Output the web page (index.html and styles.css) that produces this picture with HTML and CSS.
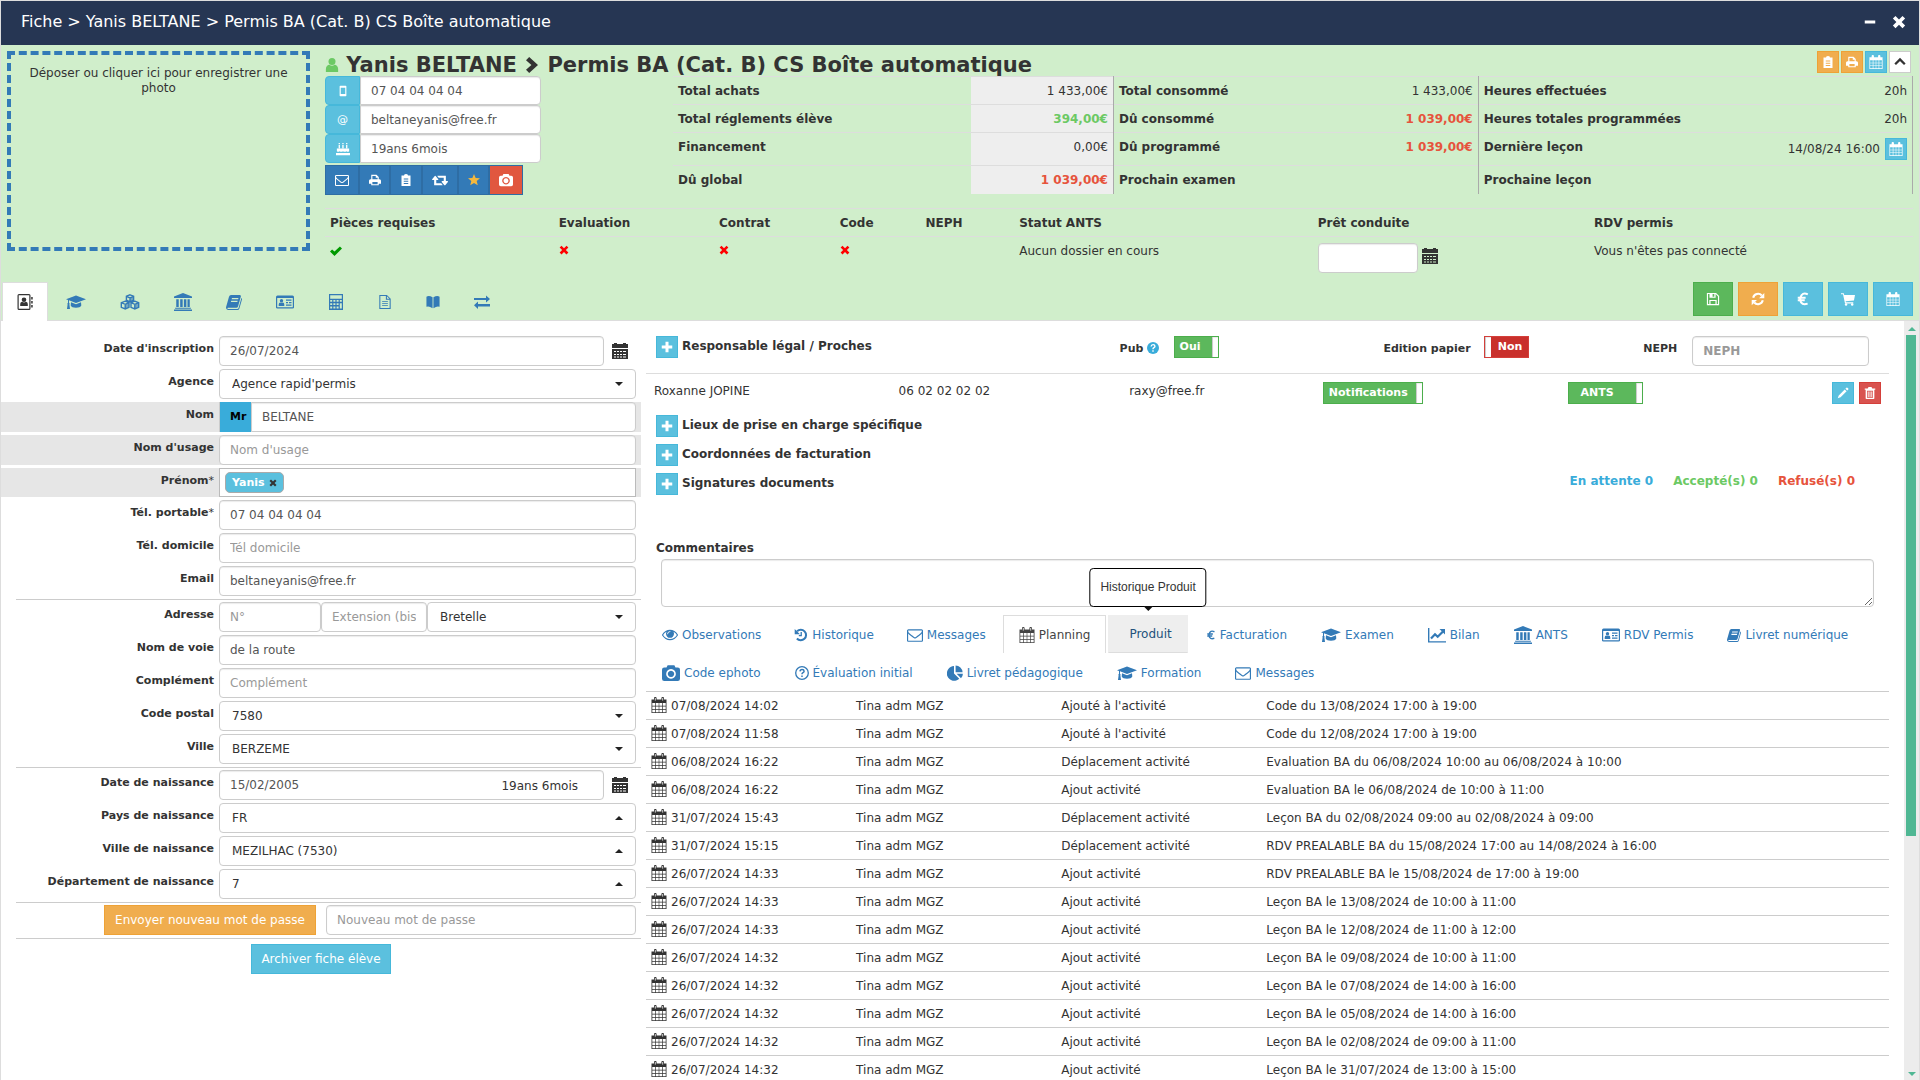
FILE: index.html
```html
<!DOCTYPE html>
<html lang="fr">
<head>
<meta charset="utf-8">
<title>Fiche élève</title>
<link rel="stylesheet" href="styles.css">
</head>
<body>
<svg class="sprite" aria-hidden="true">
  <symbol id="calendar" viewBox="0 0 16 16"><path fill-rule="evenodd" d="M.5 2.500h15V16H.5zM1.300 6v2.800h3V6zM5 6v2.800h2.700V6zM8.300 6v2.800H11V6zM11.700 6v2.800h3V6zM1.300 9.400v2.700h3V9.400zM5 9.400v2.700h2.700V9.400zM8.300 9.400v2.700H11V9.400zM11.700 9.400v2.700h3V9.400zM1.300 12.700v2.500h3v-2.500zM5 12.700v2.500h2.700v-2.500zM8.300 12.700v2.500H11v-2.500zM11.700 12.700v2.500h3v-2.500z"/><rect x="3" y="0" width="2.600" height="4.500" rx="1.100"/><rect x="10.400" y="0" width="2.600" height="4.500" rx="1.100"/><path d="M4.300 1v2.600M11.700 1v2.600" stroke="#fff" stroke-width=".8"/></symbol>
  <symbol id="picker" viewBox="0 0 16 16"><path fill-rule="evenodd" d="M0 1h2V0h3v1h6V0h3v1h2v4H0zM0 6h16v10H0zM2 8v1h2V8zM5 8v1h2V8zM8 8v1h2V8zM11 8v1h3V8zM2 11v1h2v-1zM5 11v1h2v-1zM8 11v1h2v-1zM11 11v1h3v-1zM2 13.500v1h2v-1zM5 13.500v1h2v-1zM8 13.500v1h2v-1zM11 13.500v1h3v-1z"/></symbol>
  <symbol id="envelope" viewBox="0 0 1792 1792"><path d="M1664 1504v-768q-32 36-69 66-268 206-426 338-51 43-83 67t-86.500 48.500-102.500 24.500h-2q-48 0-102.500-24.500t-86.500-48.500-83-67q-158-132-426-338-37-30-69-66v768q0 13 9.500 22.500t22.500 9.500h1472q13 0 22.500-9.500t9.500-22.500zm0-1051v-24.500l-.5-13-3-12.500-5.500-9-9-7.500-14-2.500h-1472q-13 0-22.500 9.500t-9.500 22.500q0 168 147 284 193 152 401 317 6 5 35 29.500t46 37.500 44.500 31.500 50.500 27.500 43 9h2q20 0 43-9t50.500-27.500 44.500-31.500 46-37.500 35-29.500q208-165 401-317 54-43 100.500-115.500t46.500-131.500zm128-37v1088q0 66-47 113t-113 47h-1472q-66 0-113-47t-47-113v-1088q0-66 47-113t113-47h1472q66 0 113 47t47 113z"/></symbol>
  <symbol id="eye" viewBox="0 64 1792 1792"><path d="M1664 960q-152-236-381-353 61 104 61 225 0 185-131.500 316.500t-316.500 131.500-316.500-131.500-131.500-316.500q0-121 61-225-229 117-381 353 133 205 333.500 326.500t434.500 121.500 434.500-121.500 333.500-326.500zm-720-384q0-20-14-34t-34-14q-125 0-214.500 89.500t-89.500 214.500q0 20 14 34t34 14 34-14 14-34q0-86 61-147t147-61q20 0 34-14t14-34zm848 384q0 34-20 69-140 230-376.500 368.500t-499.500 138.500-499.500-139-376.500-368q-20-35-20-69t20-69q140-229 376.500-368t499.500-139 499.500 139 376.500 368q20 35 20 69z"/></symbol>
  <symbol id="user" viewBox="0 0 16 16"><ellipse cx="8" cy="4" rx="4" ry="4"/><path d="M1 16v-3.500C1 9.500 3 8 5 7.800c2 1.300 4 1.300 6 0 2 .2 4 1.700 4 4.700V16z"/></symbol>
  <symbol id="chevron" viewBox="0 0 16 16"><path d="M2 3.200 5.200 0 14 8l-8.800 8L2 12.800 7.400 8z"/></symbol>
  <symbol id="up" viewBox="0 0 16 16"><path d="M2.500 10.500 8 5l5.500 5.500" fill="none" stroke="currentColor" stroke-width="2.600"/></symbol>
  <symbol id="phone" viewBox="0 0 16 16"><path fill-rule="evenodd" d="M4.500 1h7q1 0 1 1v12q0 1-1 1h-7q-1 0-1-1V2q0-1 1-1zM5 3.500v8.500h6V3.500z"/></symbol>
  <symbol id="cake" viewBox="0 0 16 16"><path d="M3 3.500h1.500V7H3zM7.200 3.500h1.500V7H7.200zM11.500 3.500H13V7h-1.500zM3 1h1.500v1.500H3zM7.200 1h1.500v1.500H7.200zM11.500 1H13v1.500h-1.500zM1 7.500h14v3q-1.500 1.500-3 0-2 1.500-4 0-2 1.500-4 0-1.500 1.500-3 0zM0 12.500h16V15H0z"/></symbol>
  <symbol id="print" viewBox="0 0 16 16"><path fill-rule="evenodd" d="M3 7V1h7l3 3v3h1q2 0 2 2v4h-3v2H3v-2H0V9q0-2 2-2zM4.500 7h7V5H9V2.500H4.500zM4.500 10.500v3h7v-3z"/></symbol>
  <symbol id="clip" viewBox="0 0 16 16"><path fill-rule="evenodd" d="M2 2h3.500V1q2.500-2 5 0v1H14v14H2zM5 6v1.200h6V6zM5 9v1.200h6V9zM5 12v1.200h6V12z"/></symbol>
  <symbol id="retweet" viewBox="0 0 1920 1792"><path d="M1280 1504q0 13-9.500 22.500t-22.500 9.500h-960q-8 0-13.500-2t-9-7-5.500-8-3-11.500-1-11.500v-600h-192q-26 0-45-19t-19-45q0-24 15-41l320-384q19-22 49-22t49 22l320 384q15 17 15 41 0 26-19 45t-45 19h-192v384h576q16 0 25 11l160 192q7 10 7 21zm640-416q0 24-15 41l-320 384q-20 23-49 23t-49-23l-320-384q-15-17-15-41 0-26 19-45t45-19h192v-384h-576q-16 0-25-12l-160-192q-7-9-7-20 0-13 9.500-22.500t22.500-9.500h960q8 0 13.500 2t9 7 5.500 8 3 11.500 1 11.500v600h192q26 0 45 19t19 45z"/></symbol>
  <symbol id="star" viewBox="0 0 16 16"><path d="m8 0 2.200 5.300 5.800.4-4.400 3.700 1.400 5.600L8 12l-5 3 1.400-5.600L0 5.700l5.800-.4z"/></symbol>
  <symbol id="camera" viewBox="0 0 16 16"><path fill-rule="evenodd" d="M5 1h6l1 2h2q2 0 2 2v8q0 2-2 2H2q-2 0-2-2V5q0-2 2-2h2zM8 4.500a4.300 4.300 0 1 0 .01 0zM8 6a2.800 2.800 0 1 1-.01 0z"/></symbol>
  <symbol id="check" viewBox="0 0 16 16"><path d="m0 8.500 2.800-2.600L6 8.800 13.200 2 16 4.700 6 14.500z"/></symbol>
  <symbol id="cross" viewBox="0 0 16 16"><path d="M1 4 4 1l4 4 4-4 3 3-4 4 4 4-3 3-4-4-4 4-3-3 4-4z"/></symbol>
  <symbol id="minus" viewBox="0 0 16 16"><path d="M1 6h14v4H1z"/></symbol>
  <symbol id="plus" viewBox="0 0 16 16"><path d="M6 1h4v5h5v4h-5v5H6v-5H1V6h5z"/></symbol>
  <symbol id="address" viewBox="0 0 16 16"><path fill-rule="evenodd" d="M2 0h10q1.500 0 1.500 1.500v13Q13.500 16 12 16H2Q.5 16 .5 14.500v-13Q.5 0 2 0zM1.700 1.200v13.600h10.600V1.200z"/><circle cx="7" cy="5.800" r="2.300"/><path d="M3.200 12V10q0-2 1.800-2.200 2 1.200 4 0 1.800.2 1.800 2.200v2zM14.200 3h1.500v2.500h-1.500zM14.200 7h1.500v2.500h-1.500zM14.200 11h1.500v2.500h-1.500z"/></symbol>
  <symbol id="cap" viewBox="0 0 20 16"><path d="m10 1.500 10 3.700-10 3.700L3 6.300v2.500q1 .6.400 1.600L4 15H1l.6-4.600q-.6-1 .4-1.600V6L0 5.200z"/><path d="m5 8.200 5 2 5-2 .3 3.300q-1 2.200-5.300 2.200t-5.300-2.200z"/></symbol>
  <symbol id="cubes" viewBox="0 0 20 16"><path d="M10 .8 13.600 2.200v4L10 7.800 6.400 6.200v-4zM6.400 2.400 10 4l3.600-1.600M10 4v3.800M5.200 7.200l3.800 1.500v4.600L5.200 15l-3.900-1.700V8.700zM1.300 8.700l3.900 1.600L9 8.700M5.200 10.300V15M14.800 7.200l3.900 1.500v4.600L14.800 15 11 13.300V8.700zM11 8.700l3.800 1.600 3.900-1.600M14.800 10.300V15" fill="none" stroke="currentColor" stroke-width="1.400"/><path d="m5.200 10.300 3.800-1.600v4.600L5.200 15zM14.800 10.300l3.900-1.600v4.600L14.800 15zM10 4l3.600-1.600v3.800L10 7.800z" opacity=".6"/></symbol>
  <symbol id="bank" viewBox="0 0 16 16"><path d="m8 0 8 3.200v1.300H0V3.200zM2 5.500h2.200v7H2zM5.500 5.500h2.200v7H5.500zM8.800 5.500H11v7H8.800zM12 5.500h2v7h-2zM1 13h14v1H1zM0 14.700h16V16H0z"/></symbol>
  <symbol id="book" viewBox="0 0 16 16"><path fill-rule="evenodd" d="M5 1h9q1.200.3.800 1.800L12 12.500q-.4 1.200-1.700 1.200H2q-.9.300-.3 1.200h9.500q1 0 1.400-1L15.400 4q1 .6.500 1.800l-2.600 9q-.5 1.200-1.700 1.200H2.300Q.6 16 .1 14.300q-.2-1 .2-2L3 2.800Q3.500 1 5 1zM6 4l-.4 1.200h6.500l.4-1.200zM5.200 6.700l-.3 1.200h6.400l.4-1.200z"/></symbol>
  <symbol id="card" viewBox="0 0 18 16"><path fill-rule="evenodd" d="M1.500 1.500h15Q18 1.500 18 3v10.500q0 1-1.500 1h-15Q0 14.500 0 13.500V3q0-1.500 1.500-1.500zM1.200 4v9.300h15.600V4zM10 5.500h5.500v1.200H10zM10 8h2v1.200h-2zM13 8h2.500v1.200H13zM10 10.500h5.500v1.200H10z"/><circle cx="5.500" cy="6.700" r="1.700"/><path d="M2.700 12v-1.500q0-2 1.600-2.100 1.200.8 2.400 0 1.600.1 1.600 2.100V12z"/></symbol>
  <symbol id="calc" viewBox="0 0 16 16"><path fill-rule="evenodd" d="M1 0h14v16H1zM2.200 1.200v3.600h11.600V1.200zM2.200 6v1.800h2V6zM5.400 6v1.800h2V6zM8.600 6v1.800h2V6zM11.800 6v1.800h2V6zM2.200 9.200V11h2V9.200zM5.400 9.200V11h2V9.200zM8.600 9.200V11h2V9.200zM2.200 12.500v2h2v-2zM5.400 12.500v2h2v-2zM8.600 12.500v2h2v-2zM11.800 9.200v5.300h2V9.200z"/></symbol>
  <symbol id="file" viewBox="0 0 14 16"><path fill-rule="evenodd" d="M.5 0h8.700L13.500 4.300V16H.5zM1.700 1.200v13.600h10.600V5.500H8V1.200zM9.200 1.500v2.800H12zM3.700 7h6.600v1H3.700zM3.700 9.300h6.600v1H3.700zM3.700 11.700h6.600v1H3.700z"/></symbol>
  <symbol id="openbook" viewBox="0 0 16 16"><path d="M.5 2Q3 0 7.500 2.500V15Q3 12 .5 13.500zM15.500 2Q13 0 8.500 2.500V15q4.500-3 7-1.500z"/></symbol>
  <symbol id="exchange" viewBox="0 0 16 16"><path d="M0 4h12V1.500L16 5l-4 3.500V6H0zM16 10H4V7.500L0 11.200 4 15v-2.500h12z"/></symbol>
  <symbol id="save" viewBox="0 0 16 16"><path fill-rule="evenodd" d="M1 1h10.500L15 4.500V15H1zM2.300 2.300v11.400h1.500V9h8.400v4.700h1.500V5L11 2.300V6.500H4V2.300zM5.200 10.200v3.500h5.600v-3.500zM7.500 2.300v3h2v-3z"/></symbol>
  <symbol id="refresh" viewBox="0 0 16 16"><path d="M2.500 6.500A5.700 5.700 0 0 1 12.300 4M13.500 9.500A5.700 5.700 0 0 1 3.700 12" fill="none" stroke="currentColor" stroke-width="2.400"/><path d="M15.200 1v6H9.200zM.8 15V9h6z"/></symbol>
  <symbol id="euro" viewBox="0 0 16 16"><path d="M13.500 2.800Q9 .5 6.400 3.500 4.500 6 4.800 9.500 6 15.500 13.300 13.300M2 6.500h9M2 9.500h8" fill="none" stroke="currentColor" stroke-width="2.300"/></symbol>
  <symbol id="cart" viewBox="0 0 16 16"><path d="M0 1.500h3.200L3.700 3.500H16l-1.200 6.200-9.500 1 .3 1.100H14V13H4.600L2.300 2.700H0z"/><circle cx="5.800" cy="14.300" r="1.400"/><circle cx="12.800" cy="14.300" r="1.400"/></symbol>
  <symbol id="question" viewBox="0 0 16 16"><circle cx="8" cy="8" r="8"/><path d="M5.500 6q.2-2.500 2.600-2.500T10.600 5.700Q10.600 7 8.800 7.900 8 8.400 8 9.500M8 11v2" fill="none" stroke="#fff" stroke-width="1.900"/></symbol>
  <symbol id="question-o" viewBox="0 0 16 16"><circle cx="8" cy="8" r="7.200" fill="none" stroke="currentColor" stroke-width="1.500"/><path d="M5.700 6.200q.2-2.200 2.400-2.200t2.300 2Q10.400 7 8.800 7.900 8 8.400 8 9.400M8 10.800v1.800" fill="none" stroke="currentColor" stroke-width="1.700"/></symbol>
  <symbol id="history" viewBox="0 0 16 16"><path d="M3.500 3.800A6 6 0 1 1 3.300 12" fill="none" stroke="currentColor" stroke-width="2.300"/><path d="M.8 1v6h6zM7.500 4.500h1.500V9.500H5.500V8h2z"/></symbol>
  <symbol id="chart" viewBox="0 0 18 16"><path d="M0 1h1.400v13.200H18V15.600H0z"/><path d="m3 11.500 4-4.300 2.700 2.600L15 4.500" fill="none" stroke="currentColor" stroke-width="2.200"/><path d="M11.500 2H17v5.500z"/></symbol>
  <symbol id="pie" viewBox="0 0 16 16"><path d="M7 1v7.500l5.300 5.300A7.400 7.400 0 1 1 7 1zM8.600.5a7.300 7.300 0 0 1 7 6.800h-7zM9.600 8.700h6.300q0 2.600-1.900 4.500z"/></symbol>
  <symbol id="pencil" viewBox="0 0 16 16"><path d="m10.300 3.200 2.500 2.500-8 8L1 15l1.300-3.800zM11.200 2.300 12.500 1q1-.6 1.800.2l.6.600q.7.900 0 1.700l-1.200 1.300z"/></symbol>
  <symbol id="trash" viewBox="0 0 16 16"><path fill-rule="evenodd" d="M6 0h4l1 2h4v1.600h-1.200V15q0 1-1 1H3.200q-1 0-1-1V3.600H1V2h4zM4 5v9.300h8V5zM5 6h1.200v7.200H5zM7.400 6h1.200v7.200H7.400zM9.800 6H11v7.200H9.800z"/></symbol>
</svg>

<div class="window">
  <header class="titlebar">
    <h1>Fiche &gt; Yanis BELTANE &gt; Permis BA (Cat. B) CS Boîte automatique</h1>
    <div class="window-actions">
      <button type="button" aria-label="Réduire"><svg class="i12"><use href="#minus"/></svg></button>
      <button type="button" aria-label="Fermer"><svg class="i14"><use href="#cross"/></svg></button>
    </div>
  </header>

  <section class="banner">
    <div class="identity">
      <button type="button" class="photo">Déposer ou cliquer ici pour enregistrer une photo</button>
      <div class="summary">
        <div class="summary-head">
          <h2><svg class="i14 user"><use href="#user"/></svg> Yanis BELTANE <svg class="i16"><use href="#chevron"/></svg> Permis BA (Cat. B) CS Boîte automatique</h2>
          <div class="quick">
            <button type="button" class="sq orange" aria-label="Dossier"><svg class="i12"><use href="#clip"/></svg></button>
            <button type="button" class="sq orange" aria-label="Imprimer"><svg class="i12"><use href="#print"/></svg></button>
            <button type="button" class="sq info" aria-label="Agenda"><svg class="i14"><use href="#calendar"/></svg></button>
            <button type="button" class="sq plain" aria-label="Replier"><svg class="i14"><use href="#up"/></svg></button>
          </div>
        </div>
        <div class="summary-body">
          <div class="contact">
            <div class="addon-row"><span class="addon"><svg class="i12"><use href="#phone"/></svg></span><input aria-label="Téléphone" value="07 04 04 04 04"></div>
            <div class="addon-row"><span class="addon">@</span><input aria-label="Email" value="beltaneyanis@free.fr"></div>
            <div class="addon-row"><span class="addon"><svg class="i14"><use href="#cake"/></svg></span><input aria-label="Âge" value="19ans 6mois"></div>
            <div class="toolbar">
              <button type="button" aria-label="Envoyer un message"><svg class="i14"><use href="#envelope"/></svg></button>
              <button type="button" aria-label="Imprimer"><svg class="i12"><use href="#print"/></svg></button>
              <button type="button" aria-label="Dossier"><svg class="i12"><use href="#clip"/></svg></button>
              <button type="button" aria-label="Transférer"><svg class="i16"><use href="#retweet"/></svg></button>
              <button type="button" class="gold" aria-label="Favori"><svg class="i12"><use href="#star"/></svg></button>
              <button type="button" class="danger" aria-label="Photo"><svg class="i14"><use href="#camera"/></svg></button>
            </div>
          </div>
          <table class="totals">
            <colgroup><col class="c1"><col class="c2"><col class="c3"><col class="c3"><col class="c4"><col class="c4"></colgroup>
            <tr><th scope="row">Total achats</th><td class="shade">1 433,00€</td><th scope="row">Total consommé</th><td>1 433,00€</td><th scope="row">Heures effectuées</th><td>20h</td></tr>
            <tr><th scope="row">Total réglements élève</th><td class="shade good">394,00€</td><th scope="row">Dû consommé</th><td class="bad">1 039,00€</td><th scope="row">Heures totales programmées</th><td>20h</td></tr>
            <tr class="tall"><th scope="row">Financement</th><td class="shade">0,00€</td><th scope="row">Dû programmé</th><td class="bad">1 039,00€</td><th scope="row">Dernière leçon</th><td><span class="lesson">14/08/24 16:00 <button type="button" class="sq info" aria-label="Agenda"><svg class="i14"><use href="#calendar"/></svg></button></span></td></tr>
            <tr><th scope="row">Dû global</th><td class="shade bad">1 039,00€</td><th scope="row">Prochain examen</th><td></td><th scope="row">Prochaine leçon</th><td></td></tr>
          </table>
        </div>
        <table class="status">
          <colgroup><col class="s1"><col class="s2"><col class="s3"><col class="s4"><col class="s5"><col class="s6"><col class="s7"><col></colgroup>
          <tr><th>Pièces requises</th><th>Evaluation</th><th>Contrat</th><th>Code</th><th>NEPH</th><th>Statut ANTS</th><th>Prêt conduite</th><th>RDV permis</th></tr>
          <tr>
            <td><svg class="i12 ok"><use href="#check"/></svg></td>
            <td><svg class="i10 ko"><use href="#cross"/></svg></td>
            <td><svg class="i10 ko"><use href="#cross"/></svg></td>
            <td><svg class="i10 ko"><use href="#cross"/></svg></td>
            <td></td><td>Aucun dossier en cours</td>
            <td><span class="date"><input aria-label="Prêt conduite"><svg class="i16"><use href="#picker"/></svg></span></td>
            <td>Vous n'êtes pas connecté</td>
          </tr>
        </table>
      </div>
    </div>
    <div class="tabbar">
      <nav class="main-tabs">
        <a href="#" class="active" aria-label="Fiche"><svg class="i16"><use href="#address"/></svg></a>
        <a href="#" aria-label="Formation"><svg class="i20"><use href="#cap"/></svg></a>
        <a href="#" aria-label="Produits"><svg class="i20"><use href="#cubes"/></svg></a>
        <a href="#" aria-label="ANTS"><svg class="i18"><use href="#bank"/></svg></a>
        <a href="#" aria-label="Livret"><svg class="i16"><use href="#book"/></svg></a>
        <a href="#" aria-label="Permis"><svg class="i18"><use href="#card"/></svg></a>
        <a href="#" aria-label="Comptes"><svg class="i16"><use href="#calc"/></svg></a>
        <a href="#" aria-label="Documents"><svg class="i14"><use href="#file"/></svg></a>
        <a href="#" aria-label="Code"><svg class="i14"><use href="#openbook"/></svg></a>
        <a href="#" aria-label="Échanges"><svg class="i16"><use href="#exchange"/></svg></a>
      </nav>
      <div class="actions">
        <button type="button" class="green" aria-label="Enregistrer"><svg class="i14"><use href="#save"/></svg></button>
        <button type="button" class="orange" aria-label="Actualiser"><svg class="i14"><use href="#refresh"/></svg></button>
        <button type="button" class="info" aria-label="Paiement"><svg class="i14"><use href="#euro"/></svg></button>
        <button type="button" class="info" aria-label="Panier"><svg class="i14"><use href="#cart"/></svg></button>
        <button type="button" class="info" aria-label="Agenda"><svg class="i14"><use href="#calendar"/></svg></button>
      </div>
    </div>
  </section>

  <main class="content">
    <form class="details">
      <div class="group">
        <div class="row"><label for="f1">Date d'inscription</label><div class="field date"><input id="f1" value="26/07/2024"><svg class="i16"><use href="#picker"/></svg></div></div>
        <div class="row"><label for="f2">Agence</label><div class="field select"><select id="f2"><option>Agence rapid'permis</option></select></div></div>
        <div class="row grey"><label for="f3">Nom</label><div class="field joined"><span class="civility">Mr</span><input id="f3" value="BELTANE"></div></div>
        <div class="row grey"><label for="f4">Nom d'usage</label><div class="field"><input id="f4" placeholder="Nom d'usage"></div></div>
        <div class="row grey"><label for="f5">Prénom<i>*</i></label><div class="field tags"><span class="tag">Yanis <button type="button" aria-label="Retirer"><svg class="i8"><use href="#cross"/></svg></button></span><input id="f5"></div></div>
        <div class="row"><label for="f6">Tél. portable<i>*</i></label><div class="field"><input id="f6" value="07 04 04 04 04"></div></div>
        <div class="row"><label for="f7">Tél. domicile</label><div class="field"><input id="f7" placeholder="Tél domicile"></div></div>
        <div class="row"><label for="f8">Email</label><div class="field"><input id="f8" value="beltaneyanis@free.fr"></div></div>
      </div>
      <div class="group ruled">
        <div class="row"><label for="f9">Adresse</label><div class="field address"><input id="f9" placeholder="N°"><input aria-label="Extension" placeholder="Extension (bis, ter)"><div class="select"><select aria-label="Type de voie"><option>Bretelle</option></select></div></div></div>
        <div class="row"><label for="f10">Nom de voie</label><div class="field"><input id="f10" value="de la route"></div></div>
        <div class="row"><label for="f11">Complément</label><div class="field"><input id="f11" placeholder="Complément"></div></div>
        <div class="row"><label for="f12">Code postal</label><div class="field select"><select id="f12"><option>7580</option></select></div></div>
        <div class="row"><label for="f13">Ville</label><div class="field select"><select id="f13"><option>BERZEME</option></select></div></div>
      </div>
      <div class="group ruled">
        <div class="row"><label for="f14">Date de naissance</label><div class="field date"><div class="birth"><input id="f14" value="15/02/2005"><span>19ans 6mois</span></div><svg class="i16"><use href="#picker"/></svg></div></div>
        <div class="row"><label for="f15">Pays de naissance</label><div class="field select up"><select id="f15"><option>FR</option></select></div></div>
        <div class="row"><label for="f16">Ville de naissance</label><div class="field select up"><select id="f16"><option>MEZILHAC (7530)</option></select></div></div>
        <div class="row"><label for="f17">Département de naissance</label><div class="field select up"><select id="f17"><option>7</option></select></div></div>
      </div>
      <div class="group ruled">
        <div class="password"><button type="button" class="orange">Envoyer nouveau mot de passe</button><input aria-label="Nouveau mot de passe" placeholder="Nouveau mot de passe"></div>
      </div>
      <div class="group ruled archive"><button type="button" class="info">Archiver fiche élève</button></div>
    </form>

    <div class="side">
      <div class="options">
        <div class="section-title"><button type="button" class="sq info" aria-label="Ajouter un proche"><svg class="i12"><use href="#plus"/></svg></button><h3>Responsable légal / Proches</h3></div>
        <span class="opt">Pub <svg class="i12 help"><use href="#question"/></svg></span>
        <label class="toggle">Oui<input type="checkbox" checked></label>
        <span class="opt">Edition papier</span>
        <label class="toggle off"><input type="checkbox">Non</label>
        <label class="opt" for="neph">NEPH</label>
        <input id="neph" class="neph" placeholder="NEPH">
      </div>
      <div class="relative">
        <span>Roxanne JOPINE</span><span>06 02 02 02 02</span><span>raxy@free.fr</span>
        <label class="toggle">Notifications<input type="checkbox" checked></label>
        <label class="toggle mid">ANTS<input type="checkbox" checked></label>
        <div class="row-actions"><button type="button" class="sq info" aria-label="Modifier"><svg class="i12"><use href="#pencil"/></svg></button><button type="button" class="sq red" aria-label="Supprimer"><svg class="i12"><use href="#trash"/></svg></button></div>
      </div>
      <div class="sections">
        <div class="section-title"><button type="button" class="sq info" aria-label="Ajouter un lieu"><svg class="i12"><use href="#plus"/></svg></button><h3>Lieux de prise en charge spécifique</h3></div>
        <div class="section-title"><button type="button" class="sq info" aria-label="Ajouter des coordonnées"><svg class="i12"><use href="#plus"/></svg></button><h3>Coordonnées de facturation</h3></div>
        <div class="section-title"><button type="button" class="sq info" aria-label="Ajouter une signature"><svg class="i12"><use href="#plus"/></svg></button><h3>Signatures documents</h3>
          <div class="counts"><span class="wait">En attente 0</span><span class="good">Accepté(s) 0</span><span class="bad">Refusé(s) 0</span></div></div>
      </div>
      <div class="comments"><label for="com">Commentaires</label><textarea id="com"></textarea></div>

      <nav class="tabs">
        <a href="#"><svg class="i16"><use href="#eye"/></svg>Observations</a>
        <a href="#"><svg class="i14"><use href="#history"/></svg>Historique</a>
        <a href="#"><svg class="i16"><use href="#envelope"/></svg>Messages</a>
        <a href="#" class="active"><svg class="i16"><use href="#calendar"/></svg>Planning</a>
        <a href="#" class="hover">Produit<span class="tip" role="tooltip">Historique Produit</span></a>
        <a href="#"><svg class="i10"><use href="#euro"/></svg>Facturation</a>
        <a href="#"><svg class="i20"><use href="#cap"/></svg>Examen</a>
        <a href="#"><svg class="i18"><use href="#chart"/></svg>Bilan</a>
        <a href="#"><svg class="i18"><use href="#bank"/></svg>ANTS</a>
        <a href="#"><svg class="i18"><use href="#card"/></svg>RDV Permis</a>
        <a href="#"><svg class="i14"><use href="#book"/></svg>Livret numérique</a>
        <a href="#"><svg class="i18"><use href="#camera"/></svg>Code ephoto</a>
        <a href="#"><svg class="i14"><use href="#question-o"/></svg>Évaluation initial</a>
        <a href="#"><svg class="i16"><use href="#pie"/></svg>Livret pédagogique</a>
        <a href="#"><svg class="i20"><use href="#cap"/></svg>Formation</a>
        <a href="#"><svg class="i16"><use href="#envelope"/></svg>Messages</a>
      </nav>

      <table class="log">
        <colgroup><col class="l"><col class="l"><col class="l"><col></colgroup>
        <tr><td><svg class="i16"><use href="#calendar"/></svg>07/08/2024 14:02</td><td>Tina adm MGZ</td><td>Ajouté à l'activité</td><td>Code du 13/08/2024 17:00 à 19:00</td></tr>
        <tr><td><svg class="i16"><use href="#calendar"/></svg>07/08/2024 11:58</td><td>Tina adm MGZ</td><td>Ajouté à l'activité</td><td>Code du 12/08/2024 17:00 à 19:00</td></tr>
        <tr><td><svg class="i16"><use href="#calendar"/></svg>06/08/2024 16:22</td><td>Tina adm MGZ</td><td>Déplacement activité</td><td>Evaluation BA du 06/08/2024 10:00 au 06/08/2024 à 10:00</td></tr>
        <tr><td><svg class="i16"><use href="#calendar"/></svg>06/08/2024 16:22</td><td>Tina adm MGZ</td><td>Ajout activité</td><td>Evaluation BA le 06/08/2024 de 10:00 à 11:00</td></tr>
        <tr><td><svg class="i16"><use href="#calendar"/></svg>31/07/2024 15:43</td><td>Tina adm MGZ</td><td>Déplacement activité</td><td>Leçon BA du 02/08/2024 09:00 au 02/08/2024 à 09:00</td></tr>
        <tr><td><svg class="i16"><use href="#calendar"/></svg>31/07/2024 15:15</td><td>Tina adm MGZ</td><td>Déplacement activité</td><td>RDV PREALABLE BA du 15/08/2024 17:00 au 14/08/2024 à 16:00</td></tr>
        <tr><td><svg class="i16"><use href="#calendar"/></svg>26/07/2024 14:33</td><td>Tina adm MGZ</td><td>Ajout activité</td><td>RDV PREALABLE BA le 15/08/2024 de 17:00 à 19:00</td></tr>
        <tr><td><svg class="i16"><use href="#calendar"/></svg>26/07/2024 14:33</td><td>Tina adm MGZ</td><td>Ajout activité</td><td>Leçon BA le 13/08/2024 de 10:00 à 11:00</td></tr>
        <tr><td><svg class="i16"><use href="#calendar"/></svg>26/07/2024 14:33</td><td>Tina adm MGZ</td><td>Ajout activité</td><td>Leçon BA le 12/08/2024 de 11:00 à 12:00</td></tr>
        <tr><td><svg class="i16"><use href="#calendar"/></svg>26/07/2024 14:32</td><td>Tina adm MGZ</td><td>Ajout activité</td><td>Leçon BA le 09/08/2024 de 10:00 à 11:00</td></tr>
        <tr><td><svg class="i16"><use href="#calendar"/></svg>26/07/2024 14:32</td><td>Tina adm MGZ</td><td>Ajout activité</td><td>Leçon BA le 07/08/2024 de 14:00 à 16:00</td></tr>
        <tr><td><svg class="i16"><use href="#calendar"/></svg>26/07/2024 14:32</td><td>Tina adm MGZ</td><td>Ajout activité</td><td>Leçon BA le 05/08/2024 de 14:00 à 16:00</td></tr>
        <tr><td><svg class="i16"><use href="#calendar"/></svg>26/07/2024 14:32</td><td>Tina adm MGZ</td><td>Ajout activité</td><td>Leçon BA le 02/08/2024 de 09:00 à 11:00</td></tr>
        <tr><td><svg class="i16"><use href="#calendar"/></svg>26/07/2024 14:32</td><td>Tina adm MGZ</td><td>Ajout activité</td><td>Leçon BA le 31/07/2024 de 13:00 à 15:00</td></tr>
      </table>
    </div>

    <div class="scrollbar" aria-hidden="true"><span class="arrow"></span><div class="track"><div class="thumb"></div></div><span class="arrow down"></span></div>
  </main>
</div>
</body>
</html>
```
FILE: styles.css
```css
* { box-sizing: border-box; }
body { margin: 0; background: #fff; color: #333; font: 12px/16px Verdana, "DejaVu Sans", sans-serif; }
h1, h2, h3 { margin: 0; }
a { color: #337ab7; text-decoration: none; }
button { font: inherit; color: #fff; border: 1px solid transparent; padding: 0; background: none; display: inline-flex; align-items: center; justify-content: center; }
svg { fill: currentColor; flex: none; display: block; }
.sprite { position: absolute; width: 0; height: 0; }
.i8 { width: 8px; height: 8px; }
.i10 { width: 10px; height: 10px; }
.i12 { width: 12px; height: 12px; }
.i14 { width: 14px; height: 14px; }
.i16 { width: 16px; height: 16px; }
.i18 { width: 18px; height: 18px; }
.i20 { width: 20px; height: 18px; }

input, select, textarea { font: inherit; color: #555; background: #fff; border: 1px solid #ccc; border-radius: 4px; margin: 0; min-width: 0; width: 100%; height: 30px; padding: 0 10px; box-shadow: inset 0 1px 1px rgba(0, 0, 0, .08); }
::placeholder { color: #999; opacity: 1; }

.info { background: #5bc0de; border-color: #46b8da; }
.orange { background: #f0ad4e; border-color: #eea236; }
.green { background: #5cb85c; border-color: #4cae4c; }
.red { background: #d9534f; border-color: #d43f3a; }
.plain { background: #fff; border-color: #ccc; color: #333; }
.sq { width: 22px; height: 22px; flex: none; }
.good { color: #6cc964; font-weight: bold; }
.bad { color: #e6533c; font-weight: bold; }
.wait { color: #39acda; font-weight: bold; }

.window { display: flex; flex-direction: column; height: 100vh; overflow: hidden; border: 1px solid #ddd; border-bottom: 0; }
.titlebar { display: flex; align-items: center; justify-content: space-between; flex: none; height: 44px; padding: 0 13px 3px 20px; background: #263653; color: #fff; }
.titlebar h1 { font-size: 16px; font-weight: normal; line-height: 20px; }
.window-actions { display: flex; gap: 16px; }
.window-actions button { border: 0; }

.banner { flex: none; background: #d0eecb; border-bottom: 1px solid #ddd; }
.identity { display: flex; gap: 15px; padding: 6px 6px 0; }
.photo { flex: none; width: 303px; height: 200px; border: 4px dashed #337ab7; color: #333; line-height: 15px; align-items: flex-start; padding: 11px 8px; }
.summary { flex: 1; min-width: 0; }
.summary-head { display: flex; justify-content: space-between; height: 25px; }
.summary-head h2 { display: flex; align-items: center; font-size: 21px; line-height: 27px; white-space: pre; padding-top: 3px; }
.summary-head h2 svg { height: 16px; }
.user { color: #6cc964; }
.quick { display: flex; gap: 2px; padding-right: 2px; }
.summary-body { display: flex; align-items: flex-start; justify-content: space-between; }
.contact { width: 216px; }
.addon-row { display: flex; height: 29px; }
.addon { flex: none; width: 35px; display: flex; align-items: center; justify-content: center; background: #5bc0de; border: 1px solid #46b8da; border-radius: 4px 0 0 4px; color: #fff; font-size: 11px; }
.addon-row input { height: 29px; border-radius: 0 4px 4px 0; }
.toolbar { display: flex; width: 198px; height: 30px; margin-top: 2px; }
.toolbar button { flex: 1 1 auto; background: #337ab7; border-color: #2e6da4; }
.toolbar .gold { color: #f5b83d; }
.toolbar .danger { background: #e1573f; color: #fff; }

table { border-collapse: collapse; table-layout: fixed; text-align: left; }
th, td { vertical-align: top; padding: 6px 5px 5px; }
.totals { width: calc(100% - 348px); }
.totals tr { height: 28px; border-top: 1px solid #ddd; }
.totals .tall { height: 33px; }
.totals td { text-align: right; border-right: 1px solid #aaa; }
.totals .shade { background: #eee; }
.c1 { width: 24%; }
.c2 { width: 11.5%; }
.c3 { width: 14.7%; }
.c4 { width: 17.5%; }
.lesson { display: flex; justify-content: flex-end; align-items: center; gap: 5px; height: 22px; }
.totals td:has(.lesson) { padding: 5px 5px 0; }
.status { width: 100%; margin-top: 13px; }
.status tr { height: 28px; border-top: 1px solid #ddd; }
.s1 { width: 14.4%; }
.s2 { width: 10.1%; }
.s3 { width: 7.6%; }
.s4 { width: 5.4%; }
.s5 { width: 5.9%; }
.s6 { width: 18.8%; }
.s7 { width: 17.4%; }
.status svg { margin-top: 2px; }
.ok { color: #090; }
.ko { color: #f00; }
.date { display: flex; align-items: center; gap: 8px; }
.status .date { gap: 4px; align-items: flex-start; height: 22px; }
.status .date input { flex: none; width: 100px; }
.status .date svg { margin-top: 5px; }

.tabbar { display: flex; justify-content: space-between; padding: 12px 6px 0 1px; margin-bottom: -1px; }
.main-tabs { display: flex; gap: 2px; }
.main-tabs a { display: flex; align-items: center; justify-content: center; padding: 0 15px; height: 39px; border: 1px solid transparent; border-bottom: 0; }
.main-tabs .active { padding: 0 14px; background: #fff; border-color: #ddd; color: #333; }
.actions { display: flex; gap: 5px; }
.actions button { width: 40px; height: 34px; }

.content { flex: 1; min-height: 0; display: flex; overflow: hidden; }
.details { flex: none; width: 640px; padding-top: 15px; }
.group { display: flex; flex-direction: column; gap: 3px; }
.ruled { margin-top: 3px; padding-top: 3px; background: linear-gradient(#ccc, #ccc) 15px 0 / 100% 1px no-repeat; }
.row { display: grid; grid-template-columns: 218px 1fr; padding-right: 5px; }
.row.grey { background: #e6e6e6; }
.row > label { font-size: 11px; font-weight: bold; text-align: right; padding: 5px 5px 0 0; }
.row i { font-style: normal; font-weight: normal; }
.field { position: relative; }
.row .date { padding-right: 8px; }
.select { position: relative; }
select { appearance: none; color: #333; padding-left: 12px; box-shadow: none; }
.select::after { content: ""; position: absolute; right: 13px; top: 13px; border: 4px solid transparent; border-top-color: #222; border-bottom: 0; }
.select.up::after { border: 4px solid transparent; border-bottom-color: #222; border-top: 0; }
.joined { display: flex; }
.joined input { border-radius: 0 4px 4px 0; }
.civility { flex: none; width: 32px; background: #39acda; color: #000; font-weight: bold; font-size: 11px; line-height: 30px; padding-left: 10px; border: 1px solid #ccc; border-width: 0 0 0 1px; }
.tags { display: flex; align-items: center; height: 29px; background: #fff; border: 1px solid #bbb; padding-left: 5px; }
.tags input { border: 0; height: 20px; box-shadow: none; }
.tag { display: flex; align-items: center; gap: 4px; flex: none; height: 21px; padding: 0 6px; border: 1px solid #aaa; border-radius: 5px; background: #5bc0de; color: #fff; font-size: 11px; font-weight: bold; }
.tag button { color: #333; border: 0; }
.address { display: grid; grid-template-columns: 102px 106px 1fr; }
.birth { position: relative; flex: 1; }
.birth span { position: absolute; right: 26px; top: 8px; }
.password { display: flex; justify-content: flex-end; gap: 10px; padding-right: 5px; }
.password button { width: 212px; }
.password input { width: 310px; }
.archive { align-items: center; padding-top: 6px; }
.archive button { width: 140px; height: 30px; }

.side { flex: 1; min-width: 0; padding: 0 15px 0 5px; }
.options { display: grid; grid-template-columns: 464fr 54fr 210fr 101fr 159fr 49fr 177fr 10px; padding: 15px 10px 7px; border-bottom: 1px solid #ddd; align-items: start; }
.section-title { display: flex; gap: 4px; }
h3 { font-size: 12px; line-height: 20px; }
.opt { display: flex; gap: 4px; font-size: 11px; font-weight: bold; padding-top: 5px; white-space: nowrap; }
.help { color: #39acda; margin-top: 1px; }
.neph::placeholder { font-weight: bold; }
.toggle { display: flex; justify-content: space-between; justify-self: start; width: 45px; height: 22px; padding-left: 5px; background: #5cb85c; border: 1px solid #4cae4c; color: #fff; font-size: 11px; line-height: 19px; font-weight: bold; }
.toggle input { appearance: none; width: 6px; height: 20px; padding: 0; border: 0; border-left: 1px solid #ccc; border-radius: 0; background: #fff; }
.toggle.off { background: #c9302c; border-color: #d43f3a; padding: 0 6px 0 0; }
.relative { display: grid; grid-template-columns: 245fr 231fr 194fr 246fr 264fr 48fr; align-items: start; padding: 8px; line-height: 18px; }
.relative .toggle { width: 100px; }
.relative .mid { width: 75px; padding-left: 11px; }
.row-actions { display: flex; gap: 5px; }
.sections { display: flex; flex-direction: column; gap: 7px; padding: 3px 10px 0; }
.counts { display: flex; gap: 20px; margin-left: auto; padding-right: 24px; }
.comments { padding: 43px 15px 0; }
.comments label { display: block; margin-left: -5px; font-weight: bold; line-height: 20px; }
.comments textarea { display: block; height: 48px; margin-top: 1px; }

.tabs { display: flex; flex-wrap: wrap; column-gap: 2px; padding-top: 8px; }
.tabs a { position: relative; display: flex; align-items: center; gap: 4px; height: 38px; padding: 0 15px; border: 1px solid transparent; border-bottom: 0; }
.tabs a:nth-child(-n+3) { padding-right: 14px; }
.tabs .active { color: #444; border-color: #ddd; }
.tabs .hover { background: #eee; color: #23527c; padding-left: 20px; border-bottom: 1px solid #ddd; }
.tip { position: absolute; left: 50%; bottom: 45px; transform: translateX(-50%); height: 39px; padding: 0 10px; background: #fff; border: 1px solid #000; border-radius: 4px; color: #333; font: 12px/37px "Liberation Sans", Arial, sans-serif; white-space: nowrap; }
.tip::after { content: ""; position: absolute; left: 50%; top: 100%; margin-left: -5px; border: 5px solid transparent; border-top-color: #111; border-bottom: 0; }

.log { width: 100%; }
.log tr { height: 28px; border-top: 1px solid #ccc; }
.log .l { width: 16.5%; }
.log svg { float: left; margin: -1px 4px 0 0; }

.scrollbar { flex: none; width: 15px; display: flex; flex-direction: column; background: #ececec; }
.track { flex: 1; padding: 0 3px 0 2px; }
.thumb { height: 68.5%; background: #4fb793; }
.arrow { height: 14px; }
.arrow::before { content: ""; display: block; margin: 6px 0 0 4px; width: 0; border: 4px solid transparent; border-bottom-color: #4fb793; border-top: 0; }
.arrow.down::before { border: 4px solid transparent; border-top-color: #4fb793; border-bottom: 0; }
```
